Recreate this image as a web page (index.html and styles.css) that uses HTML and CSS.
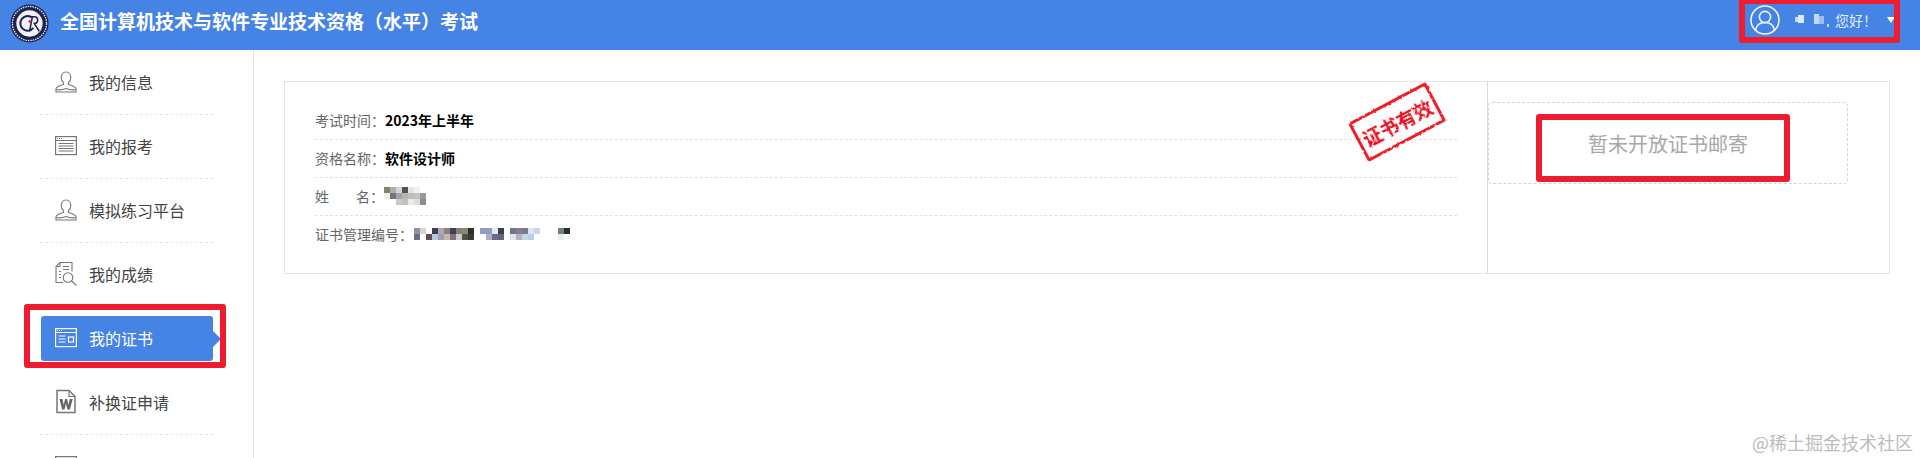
FILE: index.html
```html
<!DOCTYPE html>
<html lang="zh-CN">
<head>
<meta charset="utf-8">
<title>全国计算机技术与软件专业技术资格（水平）考试</title>
<link rel="stylesheet" href="styles.css">
</head>
<body>
<svg class="defs" width="0" height="0" aria-hidden="true">
  <filter id="rough" x="-5%" y="-5%" width="110%" height="110%">
    <feTurbulence type="fractalNoise" baseFrequency="0.35" numOctaves="2" seed="4" result="noise"/>
    <feDisplacementMap in="SourceGraphic" in2="noise" scale="2.5"/>
  </filter>
</svg>
<header class="topbar">
  <div class="brand">
    <svg class="logo" viewBox="0 0 40 40">
      <circle cx="20" cy="20" r="19.5" fill="#1c2350"/>
      <circle cx="20" cy="20" r="17.500" fill="none" stroke="#e8e8f0" stroke-width="1.400" stroke-dasharray="1.500 1"/>
      <circle cx="20" cy="20" r="13.500" fill="#f2f3f8"/>
      <path d="M22 13.500a7.500 7.500 0 1 0 2 11" fill="none" stroke="#1c2350" stroke-width="2"/>
      <path d="M20 13h5c4.500 0 4.500 7 0 7l5 8M23 13l-3 15" fill="none" stroke="#1c2350" stroke-width="1.600"/>
      <circle cx="20.500" cy="18" r="1.600" fill="#d8323a"/>
    </svg>
    <h1 class="title">全国计算机技术与软件专业技术资格（水平）考试</h1>
  </div>
  <div class="user">
    <svg class="avatar" viewBox="0 0 30 30" fill="none" stroke="#eef3fc" stroke-width="1.600">
      <circle cx="15" cy="15" r="14"/>
      <circle cx="15" cy="12" r="5.600"/>
      <path d="M5.500 25c1-5 4.500-7.500 9.500-7.500s8.500 2.500 9.500 7.500"/>
    </svg>
    <svg class="user-name" viewBox="0 0 36 14" shape-rendering="crispEdges">
      <rect x="0" y="4" width="5" height="5" fill="#c8d8f4"/>
      <rect x="3" y="2" width="6" height="8" fill="#dfe9fa"/>
      <rect x="19" y="1" width="5" height="10" fill="#c4d6f5"/>
      <rect x="24" y="3" width="5" height="8" fill="#9dbcf0"/>
      <rect x="32" y="11" width="2" height="3" fill="#c8d8f4"/>
    </svg>
    <span class="greeting">您好！</span>
    <span class="caret"></span>
  </div>
</header>

<div class="shell">
  <nav class="sidebar">
    <ul class="menu">
      <li class="menu-item"><a class="menu-link">
        <svg class="menu-icon" viewBox="0 0 22 22" fill="none" stroke="#777" stroke-width="1.100"><path d="M11 1c-3 0-4.800 2.500-4.800 5.500 0 2.200 1 4 2.300 5.200v1.800c-2 1-6.500 1.500-7.500 4V21h20v-3.500c-1-2.500-5.500-3-7.500-4v-1.800c1.300-1.200 2.300-3 2.300-5.200C15.800 3.500 14 1 11 1z"/><path d="M1 18.500c4 1 6 .5 10-1 4 1.500 6 2 10 1"/></svg>
        <span>我的信息</span></a></li>
      <li class="menu-item"><a class="menu-link">
        <svg class="menu-icon" viewBox="0 0 22 20" fill="none" stroke="#777" stroke-width="1.200"><rect x=".6" y=".6" width="20.800" height="18"/><path d="M.6 4.500h20.800M3.500 7.500h15M3.500 10h15M3.500 12.500h15M3.500 15h15" /><path d="M2 2.500h1M4 2.500h1M6 2.500h1"/></svg>
        <span>我的报考</span></a></li>
      <li class="menu-item"><a class="menu-link">
        <svg class="menu-icon" viewBox="0 0 22 22" fill="none" stroke="#777" stroke-width="1.100"><path d="M11 1c-3 0-4.800 2.500-4.800 5.500 0 2.200 1 4 2.300 5.200v1.800c-2 1-6.500 1.500-7.500 4V21h20v-3.500c-1-2.500-5.500-3-7.500-4v-1.800c1.300-1.200 2.300-3 2.300-5.200C15.800 3.500 14 1 11 1z"/><path d="M1 18.500c4 1 6 .5 10-1 4 1.500 6 2 10 1"/></svg>
        <span>模拟练习平台</span></a></li>
      <li class="menu-item"><a class="menu-link">
        <svg class="menu-icon menu-icon-tall" viewBox="0 0 22 24" fill="none" stroke="#777" stroke-width="1.100"><path d="M8 21H1V5l4-4h12v9"/><path d="M5 1v4H1M8 5h6M8 8h6M4 10h2M4 13h2M4 16h2"/><circle cx="13" cy="16" r="4.800"/><path d="M16.500 19.500L21.500 24"/></svg>
        <span>我的成绩</span></a></li>
      <li class="menu-item menu-item-active"><a class="menu-link">
        <svg class="menu-icon" viewBox="0 0 22 20" fill="none" stroke="#fff" stroke-width="1.200"><rect x=".6" y=".6" width="20.800" height="18"/><path d="M.6 4.500h20.800M3.500 8h7M3.500 11h7M3.500 14h7"/><rect x="13.500" y="9" width="5" height="5"/><path d="M2 2.500h1M4 2.500h1M6 2.500h1"/></svg>
        <span>我的证书</span></a></li>
      <li class="menu-item"><a class="menu-link">
        <svg class="menu-icon menu-icon-tall" viewBox="0 0 22 24"><path d="M2 1h12l6 6v16H2z" fill="none" stroke="#777" stroke-width="1.500"/><path d="M14 1v6h6" fill="none" stroke="#777" stroke-width="1.200"/><path d="M4.500 9.500h3l1.200 6 1.400-6h2l1.400 6 1.200-6h3l-2.800 10.500h-2.500L11 14l-1.400 6H7.100z" fill="#666"/></svg>
        <span>补换证申请</span></a></li>
      <li class="menu-item"><a class="menu-link">
        <svg class="menu-icon" viewBox="0 0 22 20" fill="none" stroke="#777" stroke-width="1.200"><rect x=".6" y=".6" width="20.800" height="18"/><path d="M.6 4.500h20.800"/></svg>
      </a></li>
    </ul>
  </nav>

  <main class="content">
    <section class="card">
      <div class="info">
        <div class="row"><span class="label">考试时间：</span><strong class="value">2023年上半年</strong></div>
        <div class="row"><span class="label">资格名称：</span><strong class="value">软件设计师</strong></div>
        <div class="row"><span class="label label-spaced"><i>姓</i><i>名：</i></span>
          <svg class="mosaic mosaic-name" viewBox="0 0 7 3" shape-rendering="crispEdges">
            <rect x="0" y="0" width="1" height="1" fill="#8a8266"/><rect x="1" y="0" width="1" height="1" fill="#b0aca8"/><rect x="2" y="0" width="1" height="1" fill="#d2d5d8"/><rect x="3" y="0" width="1" height="1" fill="#55505a"/><rect x="4" y="0" width="1" height="1" fill="#e6e6e6"/><rect x="5" y="0" width="1" height="1" fill="#f2f2f2"/>
            <rect x="0" y="1" width="1" height="1" fill="#eeeeee"/><rect x="1" y="1" width="1" height="1" fill="#77737a"/><rect x="2" y="1" width="1" height="1" fill="#9aa5b4"/><rect x="3" y="1" width="1" height="1" fill="#b9b5b0"/><rect x="4" y="1" width="1" height="1" fill="#c0bdb8"/><rect x="5" y="1" width="1" height="1" fill="#c5c5bf"/><rect x="6" y="1" width="1" height="1" fill="#9a9a98"/>
            <rect x="2" y="2" width="1" height="1" fill="#ccc9c6"/><rect x="3" y="2" width="1" height="1" fill="#c4c0bd"/><rect x="4" y="2" width="1" height="1" fill="#ece9e6"/><rect x="5" y="2" width="1" height="1" fill="#dddddd"/><rect x="6" y="2" width="1" height="1" fill="#8c8c8a"/>
          </svg>
        </div>
        <div class="row row-last"><span class="label">证书管理编号：</span>
          <svg class="mosaic mosaic-code" viewBox="0 0 26 2" shape-rendering="crispEdges">
            <rect x="0" y="0" width="1" height="1" fill="#8f93a8"/><rect x="1" y="0" width="1" height="1" fill="#e0cfd2"/><rect x="3" y="0" width="1" height="1" fill="#3d3d4e"/><rect x="4" y="0" width="1" height="1" fill="#a9a9ba"/><rect x="5" y="0" width="1" height="1" fill="#8f8075"/><rect x="6" y="0" width="1" height="1" fill="#3e4258"/><rect x="7" y="0" width="1" height="1" fill="#85806f"/><rect x="8" y="0" width="1" height="1" fill="#8b8578"/><rect x="9" y="0" width="1" height="1" fill="#2e2e2e"/><rect x="11" y="0" width="1" height="1" fill="#8c9cc4"/><rect x="12" y="0" width="1" height="1" fill="#8fa0c0"/><rect x="13" y="0" width="1" height="1" fill="#e4e8ee"/><rect x="14" y="0" width="1" height="1" fill="#3e3e52"/><rect x="16" y="0" width="1" height="1" fill="#737386"/><rect x="17" y="0" width="1" height="1" fill="#81818e"/><rect x="18" y="0" width="1" height="1" fill="#7a7a88"/><rect x="19" y="0" width="1" height="1" fill="#dce4ee"/><rect x="20" y="0" width="1" height="1" fill="#c5d6ee"/><rect x="24" y="0" width="1" height="1" fill="#707f7f"/><rect x="25" y="0" width="1" height="1" fill="#2c2c30"/>
            <rect x="0" y="1" width="1" height="1" fill="#6f6a88"/><rect x="2" y="1" width="1" height="1" fill="#5e4d52"/><rect x="3" y="1" width="1" height="1" fill="#b5ccd6"/><rect x="4" y="1" width="1" height="1" fill="#9f9fb0"/><rect x="5" y="1" width="1" height="1" fill="#c4b9b2"/><rect x="6" y="1" width="1" height="1" fill="#8a6f78"/><rect x="7" y="1" width="1" height="1" fill="#cccccc"/><rect x="8" y="1" width="1" height="1" fill="#555048"/><rect x="9" y="1" width="1" height="1" fill="#3a3a3a"/><rect x="12" y="1" width="1" height="1" fill="#a8b0c2"/><rect x="13" y="1" width="1" height="1" fill="#6a6a8c"/><rect x="14" y="1" width="1" height="1" fill="#64647e"/><rect x="16" y="1" width="1" height="1" fill="#dfe5f0"/><rect x="17" y="1" width="1" height="1" fill="#b7b2ba"/><rect x="18" y="1" width="1" height="1" fill="#c4d6e8"/><rect x="19" y="1" width="1" height="1" fill="#b8cfe8"/><rect x="24" y="1" width="1" height="1" fill="#e4f3ea"/>
          </svg>
        </div>
        <div class="stamp"><span>证书有效</span></div>
      </div>
      <aside class="mail">
        <div class="mail-box">暂未开放证书邮寄</div>
      </aside>
    </section>
  </main>
</div>

<div class="mark mark-user"></div>
<div class="mark mark-menu"></div>
<div class="mark mark-mail"></div>
<div class="watermark">@稀土掘金技术社区</div>
</body>
</html>
```

FILE: styles.css
```css
* { box-sizing: border-box; }
html, body { margin: 0; padding: 0; height: 458px; overflow: hidden; }
body {
  position: relative;
  background: #fff;
  color: #333;
  font-family: "Noto Sans CJK SC", "Liberation Sans", sans-serif;
}
.defs { position: absolute; }

.topbar {
  height: 50px;
  background: #4583e4;
  display: flex;
  justify-content: space-between;
  align-items: flex-start;
}
.brand { display: flex; align-items: center; height: 46px; padding-left: 10px; gap: 11px; }
.logo { width: 39px; height: 39px; flex: none; }
.title { margin: 0 0 4px; font-size: 19px; line-height: 26px; font-weight: 700; color: #fff; white-space: nowrap; }

.user { display: flex; align-items: center; height: 40px; padding-right: 25px; }
.avatar { width: 30px; height: 30px; }
.user-name { width: 36px; height: 14px; margin-left: 15px; }
.greeting { margin-left: 4px; width: 52px; font-size: 14px; color: #e3ecfb; white-space: nowrap; }
.caret { width: 0; height: 0; border: 4.500px solid transparent; border-top: 6px solid #fff; border-bottom: 0; }

.shell { display: flex; height: 408px; }
.sidebar { width: 254px; flex: none; border-right: 1px solid #e4e4e4; padding: 1px 40px 0; overflow: hidden; }
.menu { list-style: none; margin: 0; padding: 0; }
.menu-item {
  position: relative;
  height: 64px;
  display: flex;
  align-items: center;
  border-bottom: 1px dashed #e8e8e8;
}
.menu-link {
  display: flex;
  align-items: center;
  gap: 12px;
  width: 100%;
  height: 45px;
  padding-left: 15px;
  padding-bottom: 2px;
  border-radius: 3px;
  font-size: 16px;
  color: #444;
}
.menu-icon { width: 22px; height: 22px; flex: none; }
.menu-icon-tall { height: 25px; }
.menu-item-active { border-bottom-color: transparent; padding-left: 1px; }
.menu-item-active .menu-link { padding-left: 14px; background: #4583e4; color: #fff; }
.menu-item-active::after {
  content: "";
  position: absolute;
  left: 100%;
  top: 24px;
  border-left: 8px solid #4583e4;
  border-top: 8px solid transparent;
  border-bottom: 8px solid transparent;
}

.content { flex: 1; padding: 31px 30px 0; }
.card {
  display: flex;
  height: 193px;
  border: 1px solid #e5e5e5;
}
.info { position: relative; width: 1203px; flex: none; border-right: 1px solid #ddd; padding: 20px 30px 0; }
.row {
  display: flex;
  align-items: center;
  width: 1142px;
  height: 38px;
  padding-bottom: 2px;
  font-size: 14px;
  border-bottom: 1px dashed #e2e2e2;
}
.row-last { border-bottom: 0; }
.label { color: #666; white-space: nowrap; }
.label-spaced { display: inline-flex; justify-content: space-between; width: 69px; }
.label-spaced i { font-style: normal; }
.value { color: #000; font-weight: 700; }
.mosaic { display: block; }
.mosaic-name { width: 42px; height: 18px; }
.mosaic-code { width: 156px; height: 12px; margin-left: 1px; }

.stamp {
  position: absolute;
  left: 1068px;
  top: 18px;
  width: 88px;
  height: 44px;
  display: flex;
  align-items: center;
  justify-content: center;
  border: 3px solid #f01a26;
  border-radius: 2px;
  color: #e8101e;
  font-family: "Liberation Serif", "Noto Sans CJK SC", serif;
  font-size: 19px;
  font-weight: 700;
  white-space: nowrap;
  transform: rotate(-28deg);
  filter: url(#rough);
}

.mail { flex: 1; padding-top: 20px; }
.mail-box {
  width: 360px;
  height: 82px;
  border: 1px dashed #d5d5d5;
  border-radius: 4px;
  display: flex;
  align-items: center;
  justify-content: center;
  font-size: 20px;
  color: #a8a8a8;
}

.mark { position: absolute; border: 6px solid #ee1c2e; border-radius: 3px; }
.mark-user { left: 1739px; top: -2px; width: 161px; height: 45px; }
.mark-menu { left: 24px; top: 304px; width: 202px; height: 64px; }
.mark-mail { left: 1536px; top: 114px; width: 254px; height: 68px; }

.watermark {
  position: absolute;
  right: 7px;
  top: 429px;
  font-size: 18px;
  line-height: 26px;
  color: #bcbcbc;
  white-space: nowrap;
}
```
